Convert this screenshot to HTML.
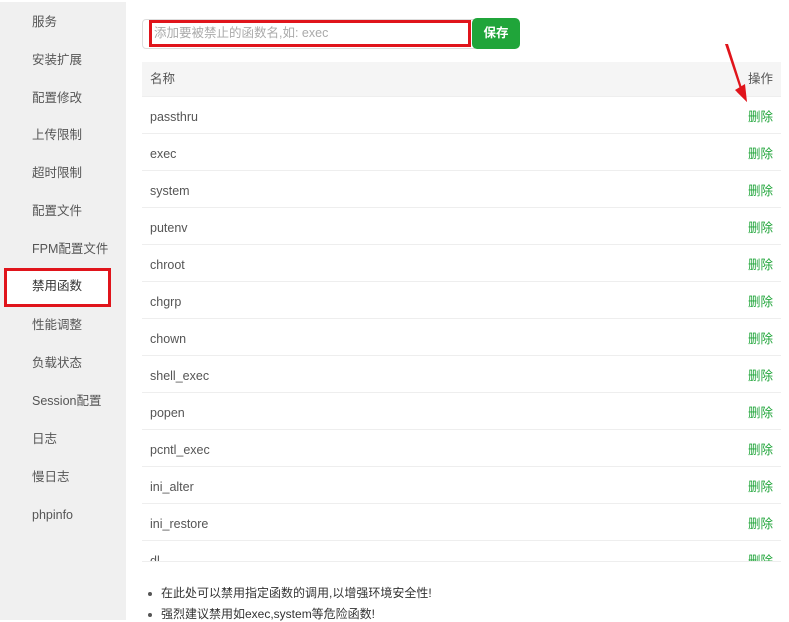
<!DOCTYPE html>
<html><head><meta charset="utf-8"><style>
*{margin:0;padding:0;box-sizing:border-box}
body{width:789px;height:620px;overflow:hidden;background:#fff;font-family:"Liberation Sans","Noto Sans CJK SC",sans-serif;font-size:12px;color:#555;position:relative}
.side{position:absolute;left:0;top:2px;width:126px;height:618px;background:#f0f0f0}
.side div{position:absolute;left:32px;height:20px;line-height:20px;font-size:12.5px;color:#555}
.sel{position:absolute;left:4px;top:268px;width:107px;height:39px;border:3px solid #e0141b;background:#fff}
.inp{position:absolute;left:142px;top:19px;width:333px;height:30px;border:1px solid #ddd;border-radius:4px 0 0 4px}
.inpred{position:absolute;left:149px;top:20px;width:322px;height:27px;border:3px solid #e0141b;color:#aaa;font-size:12.5px;line-height:21px;padding-left:2px}
.btn{position:absolute;left:472px;top:18px;width:48px;height:31px;background:#20a53a;border-radius:5px;color:#fff;font-weight:bold;font-size:12.5px;text-align:center;line-height:31px}
.tbl{position:absolute;left:142px;top:62px;width:639px;height:500px;overflow:hidden;border-bottom:1px solid #eee}
.row{height:37px;border-bottom:1px solid #eee;position:relative;line-height:40px;padding-left:8px;font-size:12.5px;color:#555}
.row span{position:absolute;right:8px;top:0;color:#20a53a}
.hd{background:#f5f5f5;height:35px;line-height:35px}
.hd span{color:#555}
.notes{position:absolute;left:148px;font-size:12px;color:#333}
.notes i{display:inline-block;width:4px;height:4px;border-radius:2px;background:#555;margin-right:9px;vertical-align:middle}
</style></head><body>
<div class="side">
<div style="top:10px">服务</div>
<div style="top:48px">安装扩展</div>
<div style="top:86px">配置修改</div>
<div style="top:123px">上传限制</div>
<div style="top:161px">超时限制</div>
<div style="top:199px">配置文件</div>
<div style="top:237px">FPM配置文件</div>
<div style="top:313px">性能调整</div>
<div style="top:351px">负载状态</div>
<div style="top:389px">Session配置</div>
<div style="top:427px">日志</div>
<div style="top:465px">慢日志</div>
<div style="top:503px">phpinfo</div>
</div>
<div class="sel"></div>
<div style="position:absolute;left:32px;top:276px;font-size:12.5px;color:#333;line-height:20px">禁用函数</div>
<div class="inp"></div>
<div class="inpred">添加要被禁止的函数名,如: exec</div>
<div class="btn">保存</div>
<div class="tbl">
<div class="row hd">名称<span>操作</span></div>
<div class="row">passthru<span>删除</span></div>
<div class="row">exec<span>删除</span></div>
<div class="row">system<span>删除</span></div>
<div class="row">putenv<span>删除</span></div>
<div class="row">chroot<span>删除</span></div>
<div class="row">chgrp<span>删除</span></div>
<div class="row">chown<span>删除</span></div>
<div class="row">shell_exec<span>删除</span></div>
<div class="row">popen<span>删除</span></div>
<div class="row">pcntl_exec<span>删除</span></div>
<div class="row">ini_alter<span>删除</span></div>
<div class="row">ini_restore<span>删除</span></div>
<div class="row">dl<span>删除</span></div>
</div>
<div class="notes" style="top:584px"><i></i>在此处可以禁用指定函数的调用,以增强环境安全性!</div>
<div class="notes" style="top:605px"><i></i>强烈建议禁用如exec,system等危险函数!</div>
<svg style="position:absolute;left:0;top:0" width="789" height="620"><polygon points="725,44 728,44 742,88 747,102 737,92 740,89" fill="#e0141b"/><polygon points="735,90 747,102 745,84" fill="#e0141b"/></svg>
</body></html>
